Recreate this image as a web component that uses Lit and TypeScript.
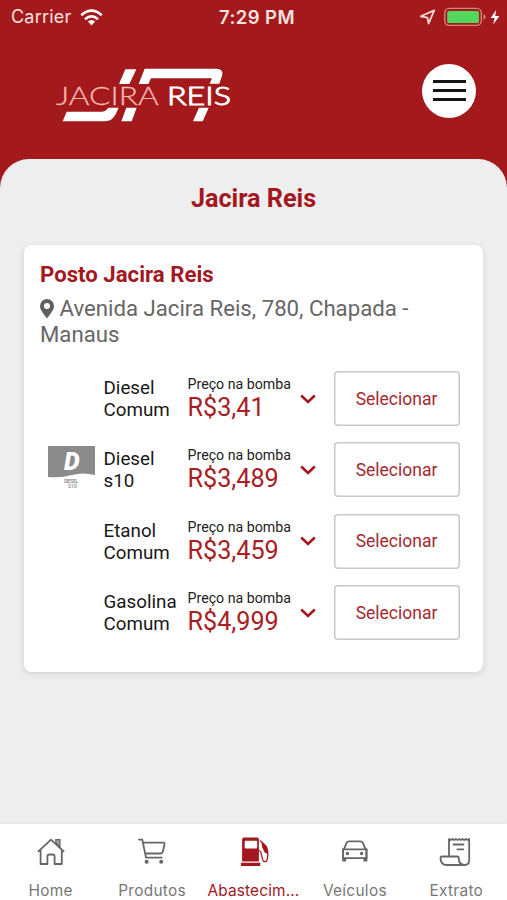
import { LitElement, html, svg, css } from "lit";
import { customElement, property } from "lit/decorators.js";

interface Fuel {
  name: string[];
  price: string;
  badge?: boolean;
}

const FUELS: Fuel[] = [
  { name: ["Diesel", "Comum"], price: "R$3,41" },
  { name: ["Diesel", "s10"], price: "R$3,489", badge: true },
  { name: ["Etanol", "Comum"], price: "R$3,459" },
  { name: ["Gasolina", "Comum"], price: "R$4,999" },
];

const ICONS = {
  home: svg`<g fill="none" stroke="currentColor" stroke-width="1.8" stroke-linejoin="round" stroke-linecap="round">
    <path d="M2.4 14.400 15 2.600 27.600 14.400M4.600 13v14h6.800v-7.500q0-2 2-2h3.200q2 0 2 2V27h7.200V13"/></g>
    <path d="M19.800 5.600V2.700h4.200v7.400Z" fill="currentColor" fill-opacity=".6" stroke="currentColor" stroke-width="1.2"/>`,
  cart: svg`<g fill="none" stroke="currentColor" stroke-width="1.8" stroke-linejoin="round" stroke-linecap="round">
    <path d="M2 2.600h3.300L9 20.600h15.700M6 5.600h20.200q1.600 0 1.300 1.600l-1.700 7.600q-.4 1.700-2.200 1.700H8.200"/></g>
    <circle cx="9.600" cy="24.700" r="2" fill="currentColor"/><circle cx="24.200" cy="24.700" r="2" fill="currentColor"/>`,
  pump: svg`<path fill="currentColor" fill-rule="evenodd" d="M6 .6h13q1.900 0 1.900 1.900v22H4.100v-22Q4.100.6 6 .6ZM7.400 3.700q-.7 0-.7.7v6.200q0 .8.7.8h11q.8 0 .8-.8V4.400q0-.7-.8-.7ZM3 25.800h19.200v3.100H3Z"/>
    <path fill="none" stroke="currentColor" stroke-width="1.300" d="M20.600 13.600q2 0 2.400 2l1.600 6.800q.6 2.200 2.400 2.200t2.300-2.200q1-5 .3-8.600-.4-3-2-5.200L22 3.500"/>
    <path fill="currentColor" d="m23.400 5 4.300 3.500q1.500 2.700 2.100 6l-.3 2.300-2.700-1-2.600-5.200Z"/>`,
  car: svg`<g fill="none" stroke="currentColor" stroke-width="1.800" stroke-linejoin="round">
    <path d="M4 12.300 6.400 6.200q.8-1.900 2.800-1.900h11q2 0 2.800 1.900l2.600 6.100M3.100 12.300h23.400v8.900H3.100Z"/></g>
    <path fill="currentColor" d="M2.200 11.500h1.800V24.400H2.200ZM25.600 11.500h1.800V24.400h-1.800ZM2.200 21h4v3.400h-4ZM23.400 21h4v3.400h-4Z"/><circle cx="7.400" cy="16.500" r="1.700" fill="currentColor"/><circle cx="21.600" cy="16.500" r="1.700" fill="currentColor"/>`,
  receipt: svg`<g fill="none" stroke="currentColor" stroke-width="1.800" stroke-linejoin="round" stroke-linecap="round">
    <path d="M8 19.500V2l1.700 1L11.400 2l1.700 1L14.800 2l1.700 1L18.200 2l1.700 1L21.600 2l1.700 1L25 2l1.600 1L28.200 2v21.300q0 4.700-4.700 4.700H5.500Q0 28-.5 21.400q0-1.900 1.500-1.900h15q1.700 0 1.700 1.900.2 6.100 5.600 6.600M12.600 7.500h9.800M16.400 12.300h6"/></g>`,
};

type IconName = keyof typeof ICONS;

const TABS: { label: string; icon: IconName; active?: boolean }[] = [
  { label: "Home", icon: "home" },
  { label: "Produtos", icon: "cart" },
  { label: "Abastecim...", icon: "pump", active: true },
  { label: "Veículos", icon: "car" },
  { label: "Extrato", icon: "receipt" },
];

@customElement("status-bar")
class StatusBar extends LitElement {
  static styles = css`
    :host {
      display: grid;
      grid-template-columns: 1fr auto 1fr;
      align-items: center;
      height: 34px;
      padding: 0 6px 0 11px;
      color: #fbe3e1;
      font: 500 17px/34px Inter, sans-serif;
    }
    .left, .right { display: flex; align-items: center; }
    .left { gap: 9px; }
    .right { justify-content: flex-end; }
    .carrier { font-weight: 400; font-size: 18px; letter-spacing: 0.2px; }
    .time { font-weight: 600; font-size: 18.5px; letter-spacing: 0.4px; padding-left: 2px; }
    svg { display: block; }
  `;
  render() {
    return html`
      <div class="left">
        <span class="carrier">Carrier</span>
        <svg width="23" height="17" viewBox="0 0 23 17">
          <g fill="none" stroke="#fff" stroke-width="2.7">
            <path d="M1.300 6.200Q11.500-3 21.700 6.200" /><path d="M5 10.200Q11.500 4.700 18 10.200" />
          </g>
          <path fill="#fff" d="M7.900 12.600q3.600-3 7.200 0L11.500 16.400Z" />
        </svg>
      </div>
      <div class="time">7:29 PM</div>
      <div class="right">
        <svg width="82" height="20" viewBox="0 0 82 20">
          <path d="M1.800 9.300 15.200 3.400 9.600 16.500 8.400 10.600Z" fill="none" stroke="#fbdcd9" stroke-width="1.8" stroke-linejoin="round" />
          <rect x="25.700" y="1.400" width="36.600" height="17" rx="4.600" fill="none" stroke="#d98078" stroke-width="1.400" />
          <rect x="28.200" y="4" width="31.800" height="12" rx="1.500" fill="#52d75d" />
          <path d="M64.400 7.200q2.200.6 2.200 2.800t-2.200 2.800Z" fill="#d98078" />
          <path d="M77.200 3 71.600 11h4l-1.400 6.400 6.200-8.500h-4.200Z" fill="#fff" />
        </svg>
      </div>
    `;
  }
}

@customElement("brand-header")
class BrandHeader extends LitElement {
  static styles = css`
    :host {
      display: flex;
      justify-content: space-between;
      align-items: flex-start;
      height: 125px;
      box-sizing: border-box;
      padding: 21px 31px 0 40px;
    }
    .menu {
      display: flex;
      flex-direction: column;
      align-items: center;
      justify-content: center;
      gap: 6px;
      width: 54px;
      height: 54px;
      margin-top: 9px;
      padding: 0 0 1px;
      box-sizing: border-box;
      border: 0;
      border-radius: 50%;
      background: #fff;
    }
    .bar { width: 33px; height: 3px; background: #151515; }
    .wordmark { font-family: Lato, sans-serif; font-size: 79px; }
    .thin { font-weight: 300; fill: #f6b9b3; stroke: #f6b9b3; stroke-width: 0.8px; }
    .strong { font-weight: 300; fill: #fff; stroke: #fff; stroke-width: 3px; }
  `;
  render() {
    return html`
      <svg width="210" height="80" viewBox="0 0 630 240">
        <g fill="#fff">
          <path d="M256 43H289L268 87H237Z" />
          <path d="M314 41H528Q552 41 546 62L538 86H509L516 70H333L325 87H296Z" />
          <path d="M80 170H184Q197 170 205 158H236L227 178Q217 199 194 199H68Z" />
          <path d="M259 158H290L275 199H244Z" />
          <path d="M477 158H506L488 199H459Z" />
        </g>
        <g class="wordmark">
          <text class="thin" x="48" y="151" textLength="308" lengthAdjust="spacingAndGlyphs">JACIRA</text>
          <text class="strong" x="381" y="151" textLength="192" lengthAdjust="spacingAndGlyphs">REIS</text>
        </g>
      </svg>
      <button class="menu" aria-label="Menu">
        <span class="bar"></span><span class="bar"></span><span class="bar"></span>
      </button>
    `;
  }
}

@customElement("fuel-row")
class FuelRow extends LitElement {
  @property({ attribute: false }) fuel!: Fuel;
  static styles = css`
    :host {
      display: grid;
      grid-template-columns: 63.5px 84px 112.5px 34px 126px;
      height: 55px;
      align-items: center;
      font-family: Roboto, sans-serif;
    }
    .badge { display: block; margin: -5px 0 0 7px; }
    .letter { font: italic 900 25px Roboto, sans-serif; fill: #fff; }
    .tiny { font: 700 5px Roboto, sans-serif; fill: #999; }
    .name { font-size: 18.8px; line-height: 22px; color: #181818; padding-top: 1px; }
    .caption { font-size: 14.2px; line-height: 17px; color: #222; white-space: nowrap; }
    .price { font-size: 25.2px; line-height: 30px; color: #a91d24; }
    .quote { padding-top: 1.5px; }
    .select {
      box-sizing: border-box;
      height: 55px;
      border: none;
      box-shadow: inset 0 0 0 1.5px #c8c8c8;
      border-radius: 4px;
      background: #fff;
      color: #a42a30;
      font: 400 17.5px Roboto, sans-serif;
      padding: 0 1px 0 0;
    }
  `;
  render() {
    return html`
      <div>
        ${this.fuel.badge
          ? html`<svg class="badge" width="49" height="44" viewBox="0 0 49 44">
              <path d="M1 1H48V30Q36 27 25 30T1 32Z" fill="#8b8b8b" />
              <text class="letter" x="17" y="24.500">D</text>
              <text class="tiny" x="17" y="38" textLength="14">DIESEL</text>
              <text class="tiny" x="21" y="43">S10</text>
            </svg>`
          : null}
      </div>
      <div class="name">${this.fuel.name.map((line) => html`<div>${line}</div>`)}</div>
      <div class="quote">
        <div class="caption">Preço na bomba</div>
        <div class="price">${this.fuel.price}</div>
      </div>
      <svg width="16" height="10" viewBox="0 0 16 10">
        <path d="M1.200 1.500 8 8 14.800 1.500" fill="none" stroke="#a3171f" stroke-width="2.600" />
      </svg>
      <button class="select">Selecionar</button>
    `;
  }
}

@customElement("station-card")
class StationCard extends LitElement {
  static styles = css`
    :host {
      display: block;
      height: 427px;
      box-sizing: border-box;
      padding: 15px 16px 0;
      border-radius: 8px;
      background: #fff;
      box-shadow: 0 2px 7px rgba(0, 0, 0, 0.12);
      font-family: Roboto, sans-serif;
    }
    .name { margin: 0; font-size: 22.2px; line-height: 28px; font-weight: 700; color: #a3171f; }
    .address { margin: 7px 0 0; font-size: 22.2px; line-height: 26px; color: #666; }
    .pin { display: inline-block; vertical-align: -2px; margin-right: 5.5px; }
    .fuels { display: flex; flex-direction: column; gap: 16.300px; margin-top: 24.700px; }
  `;
  render() {
    return html`
      <h2 class="name">Posto Jacira Reis</h2>
      <p class="address"><svg class="pin" width="14" height="19" viewBox="0 0 14 19">
          <path fill="#606060" fill-rule="evenodd" d="M7 0a7 7 0 0 1 7 7c0 3-1.500 5-6.200 11.500a1 1 0 0 1-1.600 0C1.500 12 0 10 0 7a7 7 0 0 1 7-7Zm0 4a3 3 0 1 0 0 6 3 3 0 0 0 0-6Z" />
        </svg>Avenida Jacira Reis, 780, Chapada -<br />Manaus</p>
      <div class="fuels">${FUELS.map((fuel) => html`<fuel-row .fuel=${fuel}></fuel-row>`)}</div>
    `;
  }
}

@customElement("tab-bar")
class TabBar extends LitElement {
  static styles = css`
    :host {
      display: grid;
      grid-template-columns: repeat(5, 1fr);
      height: 76px;
      background: #fff;
      box-shadow: 0 -1px 2px rgba(0, 0, 0, 0.04);
      font: 400 15.400px/20px Inter, sans-serif;
      letter-spacing: 0.300px;
      color: #777;
    }
    .tab { display: flex; flex-direction: column; align-items: center; padding-top: 13px; gap: 14px; white-space: nowrap; }
    .icon { color: #666; overflow: visible; }
    .active, .active .icon { color: #a3171f; }
    .active { letter-spacing: 0.15px; }
  `;
  render() {
    return html`${TABS.map(
      (tab) => html`<div class="tab ${tab.active ? "active" : ""}">
        <svg class="icon" width="30" height="30" viewBox="0 0 30 30">${ICONS[tab.icon]}</svg>
        <span>${tab.label}</span>
      </div>`
    )}`;
  }
}

@customElement("app-root")
class AppRoot extends LitElement {
  static styles = css`
    :host {
      display: flex;
      flex-direction: column;
      width: 507px;
      height: 900px;
      overflow: hidden;
      background: #a3191c;
    }
    .sheet {
      flex: 1;
      padding: 24px 24px 0;
      border-radius: 29px 29px 0 0;
      background: #eee;
    }
    .title {
      margin: 0 0 29.500px;
      text-align: center;
      font: 700 25.200px/32px Roboto, sans-serif;
      color: #a3171f;
    }
  `;
  render() {
    return html`
      <status-bar></status-bar>
      <brand-header></brand-header>
      <main class="sheet">
        <h1 class="title">Jacira Reis</h1>
        <station-card></station-card>
      </main>
      <tab-bar></tab-bar>
    `;
  }
}
